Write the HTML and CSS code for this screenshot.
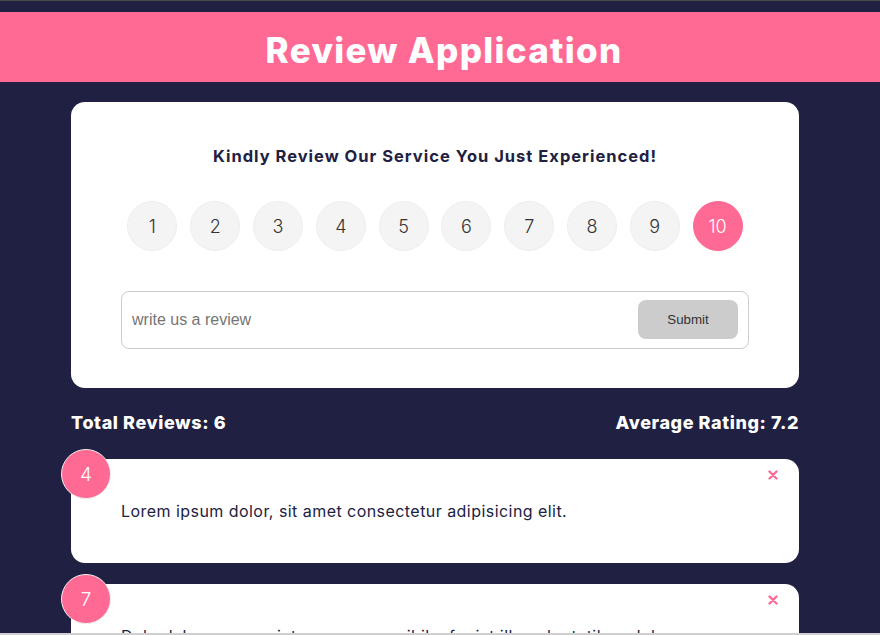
FILE: index.html
```html
<!DOCTYPE html>
<html lang="en">
<head>
<meta charset="UTF-8">
<title>Review Application</title>
<link rel="stylesheet" href="styles.css">
</head>
<body>
<header class="app-header">
  <h1 class="app-title">Review Application</h1>
</header>
<main class="container">
  <section class="card form-card">
    <h2 class="form-heading">Kindly Review Our Service You Just Experienced!</h2>
    <ul class="rating">
      <li class="rate">1</li>
      <li class="rate">2</li>
      <li class="rate">3</li>
      <li class="rate">4</li>
      <li class="rate">5</li>
      <li class="rate">6</li>
      <li class="rate">7</li>
      <li class="rate">8</li>
      <li class="rate">9</li>
      <li class="rate selected">10</li>
    </ul>
    <form class="input-group">
      <input class="review-input" type="text" placeholder="write us a review">
      <button class="submit-btn" type="button">Submit</button>
    </form>
  </section>
  <div class="stats">
    <h4 class="stat">Total Reviews: 6</h4>
    <h4 class="stat">Average Rating: 7.2</h4>
  </div>
  <div class="review-list">
    <div class="card review">
      <div class="num">4</div>
      <button class="close" type="button" aria-label="delete"><svg viewBox="0 0 10 10" width="10" height="10"><path d="M1.5 1.5 L8.5 8.5 M8.5 1.5 L1.5 8.5" stroke="#ff6a95" stroke-width="2.4" stroke-linecap="round"/></svg></button>
      <p class="review-text">Lorem ipsum dolor, sit amet consectetur adipisicing elit.</p>
    </div>
    <div class="card review">
      <div class="num">7</div>
      <button class="close" type="button" aria-label="delete"><svg viewBox="0 0 10 10" width="10" height="10"><path d="M1.5 1.5 L8.5 8.5 M8.5 1.5 L1.5 8.5" stroke="#ff6a95" stroke-width="2.4" stroke-linecap="round"/></svg></button>
      <p class="review-text">Dolor laborum eveniet accusamus nihil a fugiat illo voluptatibus dolores.</p>
    </div>
  </div>
</main>
<div class="bottom-edge"></div>
</body>
</html>
```
FILE: styles.css
```css
* { box-sizing: border-box; }

html, body { margin: 0; padding: 0; }

body {
  background: #202142;
  font-family: Inter, "Open Sans", sans-serif;
  color: #202142;
  border-top: 1px solid #4a4a4a;
  padding-top: 11px;
  overflow: hidden;
}

.app-header {
  background: #ff6a95;
  height: 70px;
  display: flex;
  align-items: center;
  justify-content: center;
  padding: 5px 0 0 8px;
}

.app-title {
  margin: 0;
  color: #fff;
  font-size: 35px;
  font-weight: 800;
  letter-spacing: 1.3px;
}

.container {
  width: 728px;
  margin: 20px 0 0 71px;
}

.card {
  background: #fff;
  border-radius: 14px;
}

.form-card {
  padding: 42px 50px 39px;
}

.form-heading {
  margin: 0;
  text-align: center;
  font-size: 16.5px;
  line-height: 24px;
  font-weight: 700;
  letter-spacing: 1px;
  color: #202142;
}

.rating {
  list-style: none;
  margin: 33px 0 0;
  padding: 0;
  display: flex;
  justify-content: center;
  gap: 12.8px;
}

.rate {
  width: 50px;
  height: 50px;
  border-radius: 50%;
  background: #f4f4f4;
  border: 1px solid #eee;
  display: flex;
  align-items: center;
  justify-content: center;
  font-size: 18px;
  font-weight: 300;
  color: #333;
}

.rate.selected {
  background: #ff6a95;
  border-color: #ff6a95;
  color: #fff;
}

.input-group {
  margin: 40px 0 0;
  height: 58px;
  border: 1px solid #ccc;
  border-radius: 8px;
  display: flex;
  align-items: center;
  padding: 0 10px 0 10px;
}

.review-input {
  flex: 1;
  border: none;
  outline: none;
  font-family: "Liberation Sans", Arial, sans-serif;
  font-size: 16px;
  color: #333;
  padding: 0;
  background: transparent;
}

.review-input::placeholder { color: #757575; }

.submit-btn {
  width: 100px;
  height: 39px;
  border: none;
  border-radius: 8px;
  background: #ccc;
  color: #333;
  font-family: "Liberation Sans", Arial, sans-serif;
  font-size: 13.3px;
  margin-top: -2px;
}

.stats {
  display: flex;
  justify-content: space-between;
  align-items: center;
  margin: 21px 0 23px;
}

.stat {
  margin: 0;
  color: #fff;
  font-size: 18px;
  line-height: 27px;
  font-weight: 800;
  letter-spacing: 0.6px;
}

.review-list {
  display: flex;
  flex-direction: column;
  gap: 21px;
}

.review {
  position: relative;
  padding: 40px 50px;
}

.num {
  position: absolute;
  top: -10px;
  left: -10px;
  width: 50px;
  height: 50px;
  border-radius: 50%;
  background: #ff6a95;
  border: 1px solid #eee;
  color: #fff;
  font-size: 19px;
  font-weight: 300;
  display: flex;
  align-items: center;
  justify-content: center;
}

.close {
  position: absolute;
  top: 11px;
  right: 21px;
  padding: 0;
  border: none;
  background: none;
  width: 10px;
  height: 10px;
  display: flex;
}

.review-text {
  margin: 0;
  font-size: 16px;
  line-height: 24px;
  letter-spacing: 0.45px;
  color: #202142;
}

.bottom-edge {
  position: fixed;
  left: 0;
  right: 0;
  bottom: 0;
  height: 2px;
  background: #cfcfcf;
}
```
